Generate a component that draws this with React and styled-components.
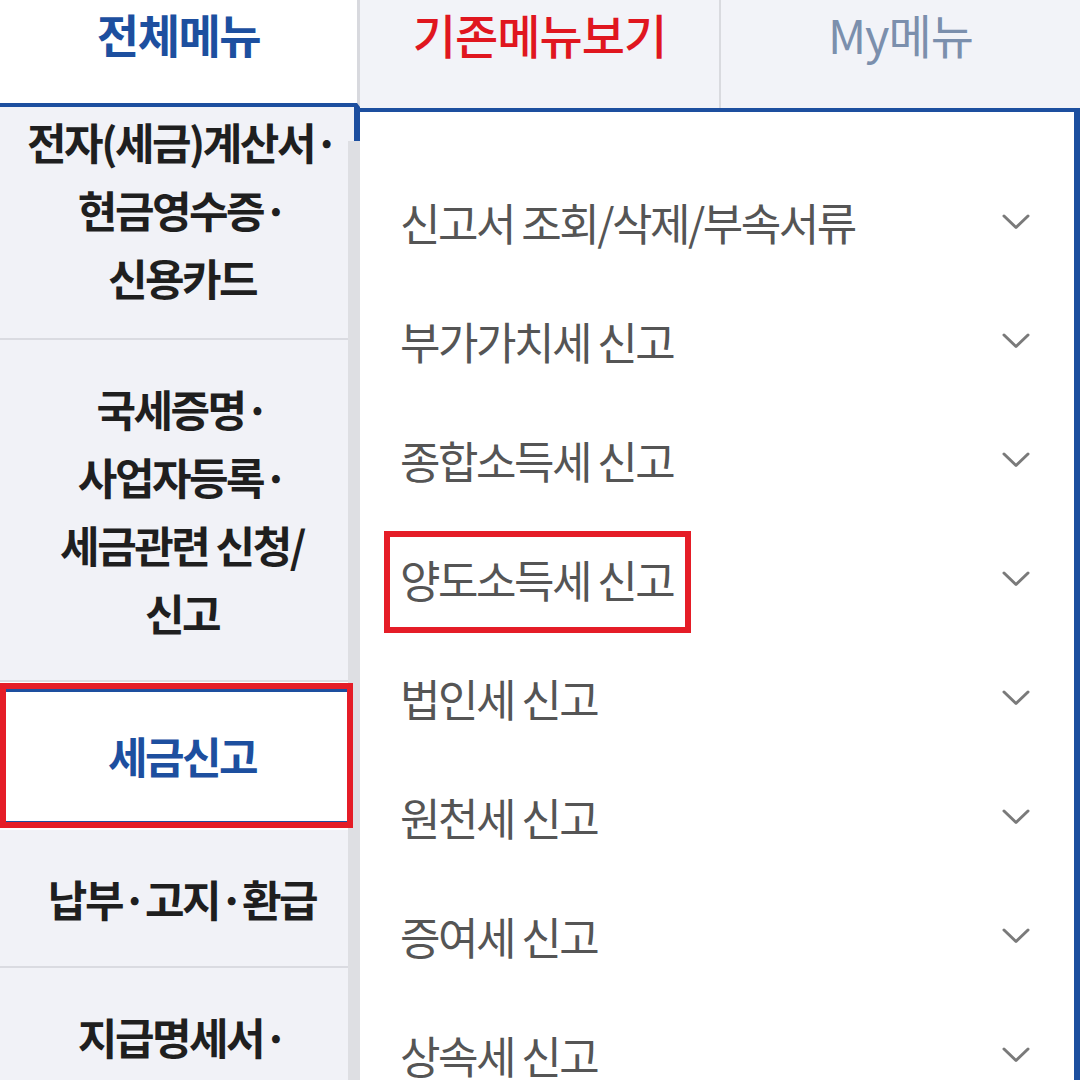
import React from "react";
import styled, { createGlobalStyle } from "styled-components";

const Global = createGlobalStyle`
  html, body { margin: 0; padding: 0; background: #ffffff; }
  body { font-family: "Noto Sans CJK KR", "Noto Sans", sans-serif; }
  * { box-sizing: border-box; }
`;

const BLUE = "#1d4f9f";
const RED = "#e51d27";

const Page = styled.div`
  width: 1080px;
  height: 1080px;
  overflow: hidden;
  display: flex;
  background: #ffffff;
`;

const LeftCol = styled.div`
  width: 360px;
  display: flex;
  flex-direction: column;
`;

const MainTab = styled.div`
  height: 107px;
  background: #ffffff;
  border-bottom: 4px solid ${BLUE};
  border-right: 3px solid #d8d9de;
  text-align: center;
  font-size: 46px;
  line-height: 67px;
  font-weight: 700;
  letter-spacing: -1.5px;
  color: ${BLUE};
`;

const LeftBody = styled.div`
  flex: 1;
  display: flex;
  overflow: hidden;
`;

const MenuScroll = styled.div`
  width: 348px;
  background: #f1f2f7;
`;

const MenuList = styled.ul`
  list-style: none;
  margin: 0;
  padding: 0;
`;

const padFor = (p) => {
  if (p.$first) return "0 0 27px 16px";
  if (p.$active) return "39px 0 39px 16px";
  return "34px 0 34px 16px";
};

const MenuItem = styled.li`
  position: relative;
  padding: ${padFor};
  border-bottom: 2px solid ${(p) => (p.$active ? "transparent" : "#dadbe1")};
  background: ${(p) => (p.$active ? "#ffffff" : "transparent")};
  text-align: center;
  font-size: 43px;
  line-height: 68px;
  font-weight: 700;
  letter-spacing: -2.5px;
  color: ${(p) => (p.$active ? BLUE : "#1f1f1f")};
  white-space: nowrap;
`;

const ActiveFrame = styled.span`
  position: absolute;
  top: 1px;
  left: 0;
  right: -5px;
  bottom: 0;
  border: 6px solid ${RED};
  pointer-events: none;
  &::before {
    content: "";
    position: absolute;
    left: 0;
    right: 0;
    top: 0;
    bottom: 0;
    border-top: 3px solid ${BLUE};
    border-bottom: 1px solid ${BLUE};
  }
`;

const Line = styled.span`
  display: block;
`;

const Rail = styled.div`
  width: 12px;
  display: flex;
  flex-direction: column;
`;

const RailTop = styled.div`
  height: 34px;
  background: #f1f2f7;
  border-right: 6px solid ${BLUE};
`;

const RailTrack = styled.div`
  flex: 1;
  background: #dedfe3;
`;

const RightCol = styled.div`
  flex: 1;
  display: flex;
  flex-direction: column;
`;

const TabRow = styled.div`
  height: 111px;
  display: flex;
  background: #f2f3f8;
`;

const Tab = styled.div`
  flex: 1;
  height: 108px;
  text-align: center;
  font-size: 47px;
  line-height: 67px;
  letter-spacing: -1px;
  font-weight: ${(p) => p.$weight};
  color: ${(p) => p.$color};
  border-right: ${(p) => (p.$divider ? "2px solid #d9dadf" : "none")};
`;

const Panel = styled.div`
  flex: 1;
  background: #ffffff;
  border-top: 4px solid ${BLUE};
  border-right: 6px solid ${BLUE};
  padding: 50px 44px 0 40px;
`;

const Row = styled.div`
  height: 119px;
  display: flex;
  align-items: center;
  justify-content: space-between;
`;

const RowLabel = styled.span`
  position: relative;
  font-size: 44px;
  line-height: 44px;
  letter-spacing: -2.5px;
  color: #555555;
  white-space: nowrap;
`;

const Mark = styled.span`
  position: absolute;
  left: -16px;
  right: -18px;
  top: -26px;
  bottom: -32px;
  border: 6px solid ${RED};
  pointer-events: none;
`;

const Chevron = () => (
  <svg width="28" height="16" viewBox="0 0 28 16" fill="none">
    <path d="M2 2 L14 13.5 L26 2" stroke="#7a7a7a" strokeWidth="3" strokeLinecap="round" strokeLinejoin="round" />
  </svg>
);

const leftItems = [
  { lines: ["전자(세금)계산서·", "현금영수증·", "신용카드"] },
  { lines: ["국세증명·", "사업자등록·", "세금관련 신청/", "신고"] },
  { lines: ["세금신고"], active: true },
  { lines: ["납부·고지·환급"] },
  { lines: ["지급명세서·"] },
];

const rightItems = [
  "신고서 조회/삭제/부속서류",
  "부가가치세 신고",
  "종합소득세 신고",
  "양도소득세 신고",
  "법인세 신고",
  "원천세 신고",
  "증여세 신고",
  "상속세 신고",
];

export default function App() {
  return (
    <>
      <Global />
      <Page>
        <LeftCol>
          <MainTab>전체메뉴</MainTab>
          <LeftBody>
            <MenuScroll>
              <MenuList>
                {leftItems.map((item, i) => (
                  <MenuItem key={i} $active={item.active} $first={i === 0}>
                    {item.lines.map((l, j) => (
                      <Line key={j}>{l}</Line>
                    ))}
                    {item.active && <ActiveFrame />}
                  </MenuItem>
                ))}
              </MenuList>
            </MenuScroll>
            <Rail>
              <RailTop />
              <RailTrack />
            </Rail>
          </LeftBody>
        </LeftCol>
        <RightCol>
          <TabRow>
            <Tab $divider $weight={500} $color="#e0161f">기존메뉴보기</Tab>
            <Tab $weight={400} $color="#7b8fad">My메뉴</Tab>
          </TabRow>
          <Panel>
            {rightItems.map((t, i) => (
              <Row key={i}>
                <RowLabel>
                  {t}
                  {i === 3 && <Mark />}
                </RowLabel>
                <Chevron />
              </Row>
            ))}
          </Panel>
        </RightCol>
      </Page>
    </>
  );
}
